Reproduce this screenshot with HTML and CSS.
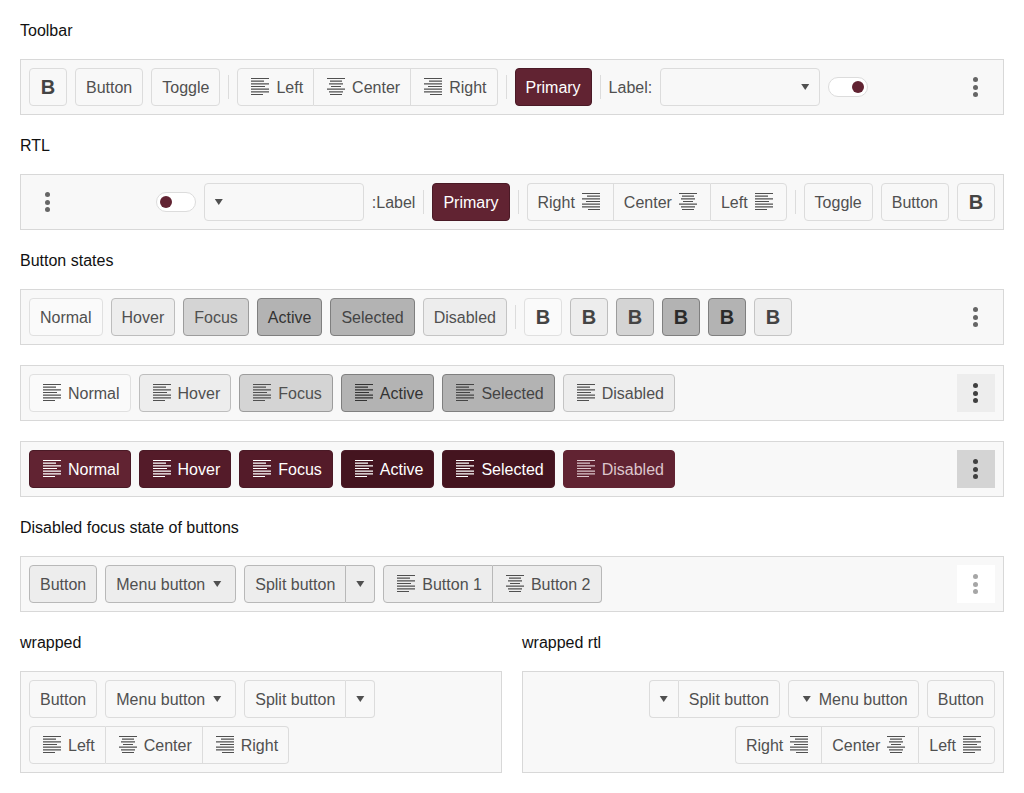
FILE: index.html
```html
<!DOCTYPE html>
<html lang="en">
<head>
<meta charset="utf-8">
<title>Toolbar</title>
<link rel="stylesheet" href="styles.css">
</head>
<body>
<svg class="sprite" xmlns="http://www.w3.org/2000/svg">
  <symbol id="i-left" viewBox="0 0 24 24"><path d="M3 3.5h18M3 6.2h13M3 8.8h18M3 11.5h14M3 14.2h18M3 16.8h18M3 19.5h12"/></symbol>
  <symbol id="i-center" viewBox="0 0 24 24"><path d="M3 3.5h18M6 6.2h12M5 8.8h14M7 11.5h10M3 14.2h18M5 16.8h14M6 19.5h12"/></symbol>
  <symbol id="i-right" viewBox="0 0 24 24"><path d="M3 3.5h18M8 6.2h13M3 8.8h18M7 11.5h14M3 14.2h18M3 16.8h18M9 19.5h12"/></symbol>
</svg>

<p class="label">Toolbar</p>
<div class="toolbar">
  <button class="btn sq"><span class="bold">B</span></button>
  <button class="btn">Button</button>
  <button class="btn">Toggle</button>
  <span class="sep"></span>
  <div class="group">
    <button class="btn"><svg class="ico"><use href="#i-left"/></svg>Left</button>
    <button class="btn"><svg class="ico"><use href="#i-center"/></svg>Center</button>
    <button class="btn"><svg class="ico"><use href="#i-right"/></svg>Right</button>
  </div>
  <span class="sep"></span>
  <button class="btn primary">Primary</button>
  <span class="sep"></span>
  <span class="txt">Label:</span>
  <div class="select"><span class="caret"></span></div>
  <span class="switch"><span class="knob"></span></span>
  <button class="kebab"><i></i><i></i><i></i></button>
</div>

<p class="label">RTL</p>
<div class="toolbar" dir="rtl">
  <button class="btn sq"><span class="bold">B</span></button>
  <button class="btn">Button</button>
  <button class="btn">Toggle</button>
  <span class="sep"></span>
  <div class="group">
    <button class="btn"><svg class="ico"><use href="#i-left"/></svg>Left</button>
    <button class="btn"><svg class="ico"><use href="#i-center"/></svg>Center</button>
    <button class="btn"><svg class="ico"><use href="#i-right"/></svg>Right</button>
  </div>
  <span class="sep"></span>
  <button class="btn primary">Primary</button>
  <span class="sep"></span>
  <span class="txt">Label:</span>
  <div class="select"><span class="caret"></span></div>
  <span class="switch"><span class="knob"></span></span>
  <button class="kebab"><i></i><i></i><i></i></button>
</div>

<p class="label">Button states</p>
<div class="stack">
  <div class="toolbar">
    <button class="btn normal">Normal</button>
    <button class="btn hover">Hover</button>
    <button class="btn focus">Focus</button>
    <button class="btn active">Active</button>
    <button class="btn selected">Selected</button>
    <button class="btn disabled">Disabled</button>
    <span class="sep"></span>
    <button class="btn sq normal"><span class="bold">B</span></button>
    <button class="btn sq hover"><span class="bold">B</span></button>
    <button class="btn sq focus"><span class="bold">B</span></button>
    <button class="btn sq active dark"><span class="bold">B</span></button>
    <button class="btn sq selected dark"><span class="bold">B</span></button>
    <button class="btn sq disabled"><span class="bold">B</span></button>
    <button class="kebab"><i></i><i></i><i></i></button>
  </div>
  <div class="toolbar">
    <button class="btn normal"><svg class="ico"><use href="#i-left"/></svg>Normal</button>
    <button class="btn hover"><svg class="ico"><use href="#i-left"/></svg>Hover</button>
    <button class="btn focus"><svg class="ico"><use href="#i-left"/></svg>Focus</button>
    <button class="btn active"><svg class="ico"><use href="#i-left"/></svg>Active</button>
    <button class="btn selected"><svg class="ico"><use href="#i-left"/></svg>Selected</button>
    <button class="btn disabled"><svg class="ico"><use href="#i-left"/></svg>Disabled</button>
    <button class="kebab kebab-hover"><i></i><i></i><i></i></button>
  </div>
  <div class="toolbar">
    <button class="btn primary"><svg class="ico"><use href="#i-left"/></svg>Normal</button>
    <button class="btn primary p-hover"><svg class="ico"><use href="#i-left"/></svg>Hover</button>
    <button class="btn primary p-hover"><svg class="ico"><use href="#i-left"/></svg>Focus</button>
    <button class="btn primary p-active"><svg class="ico"><use href="#i-left"/></svg>Active</button>
    <button class="btn primary p-active"><svg class="ico"><use href="#i-left"/></svg>Selected</button>
    <button class="btn primary p-disabled"><svg class="ico"><use href="#i-left"/></svg>Disabled</button>
    <button class="kebab kebab-focus"><i></i><i></i><i></i></button>
  </div>
</div>

<p class="label">Disabled focus state of buttons</p>
<div class="toolbar">
  <button class="btn hover-off">Button</button>
  <button class="btn hover-off">Menu button<span class="caret after"></span></button>
  <div class="group">
    <button class="btn hover-off">Split button</button>
    <button class="btn hover-off drop"><span class="caret"></span></button>
  </div>
  <div class="group">
    <button class="btn hover-off"><svg class="ico"><use href="#i-left"/></svg>Button 1</button>
    <button class="btn hover-off"><svg class="ico"><use href="#i-center"/></svg>Button 2</button>
  </div>
  <button class="kebab kebab-off"><i></i><i></i><i></i></button>
</div>

<div class="columns">
  <div>
    <p class="label">wrapped</p>
    <div class="toolbar wrap">
      <button class="btn">Button</button>
      <button class="btn">Menu button<span class="caret after"></span></button>
      <div class="group">
        <button class="btn">Split button</button>
        <button class="btn drop"><span class="caret"></span></button>
      </div>
      <div class="group">
        <button class="btn"><svg class="ico"><use href="#i-left"/></svg>Left</button>
        <button class="btn"><svg class="ico"><use href="#i-center"/></svg>Center</button>
        <button class="btn"><svg class="ico"><use href="#i-right"/></svg>Right</button>
      </div>
    </div>
  </div>
  <div>
    <p class="label">wrapped rtl</p>
    <div class="toolbar wrap" dir="rtl">
      <button class="btn">Button</button>
      <button class="btn">Menu button<span class="caret after"></span></button>
      <div class="group">
        <button class="btn">Split button</button>
        <button class="btn drop"><span class="caret"></span></button>
      </div>
      <div class="group">
        <button class="btn"><svg class="ico"><use href="#i-left"/></svg>Left</button>
        <button class="btn"><svg class="ico"><use href="#i-center"/></svg>Center</button>
        <button class="btn"><svg class="ico"><use href="#i-right"/></svg>Right</button>
      </div>
    </div>
  </div>
</div>
</body>
</html>
```
FILE: styles.css
```css
* { box-sizing: border-box; }

html, body { margin: 0; background: #fff; }

body {
  padding: 20px;
  font: 16px/19px "Liberation Sans", Arial, sans-serif;
  color: #111;
}

.sprite { position: absolute; width: 0; height: 0; overflow: hidden; }

.sprite path { fill: none; stroke: currentColor; stroke-width: 1.2; }

.label { margin: 0 0 20px; height: 19px; line-height: 21px; }

.toolbar {
  display: flex;
  align-items: center;
  gap: 8px;
  height: 56px;
  padding: 8px;
  margin-bottom: 20px;
  background: #f8f8f8;
  border: 1px solid #d8d8d8;
}

.toolbar.wrap { flex-wrap: wrap; height: 102px; margin-bottom: 0; align-content: flex-start; }

.stack { display: flex; flex-direction: column; }

.columns { display: grid; grid-template-columns: 1fr 1fr; gap: 20px; }

.btn {
  display: inline-flex;
  align-items: center;
  flex: none;
  height: 38px;
  padding: 0 10px;
  margin: 0;
  font: inherit;
  color: #505050;
  white-space: nowrap;
  background: transparent;
  border: 1px solid #dcdcdc;
  border-radius: 4px;
}

.btn.sq { width: 38px; padding: 0; justify-content: center; }

.bold { font-size: 20px; font-weight: 700; color: #444; }

.ico {
  width: 24px;
  height: 24px;
  flex: none;
  margin-inline-end: 4px;
  fill: none;
  stroke: currentColor;
}

.group { display: flex; flex: none; }

.group .btn { border-radius: 0; }

.group .btn + .btn { border-inline-start: 0; }

.group .btn:first-child { border-start-start-radius: 4px; border-end-start-radius: 4px; }

.group .btn:last-child { border-start-end-radius: 4px; border-end-end-radius: 4px; }

.btn.drop { padding: 0 6px; }

.caret {
  display: block;
  flex: none;
  width: 16px;
  height: 6px;
  background: #505050;
  clip-path: polygon(4px 0, 12px 0, 8px 100%);
}

.caret.after { margin-inline-start: 4px; }

.sep { flex: none; width: 1px; height: 24px; background: #dcdcdc; }

.txt { flex: none; color: #505050; }

.select {
  display: flex;
  align-items: center;
  justify-content: flex-end;
  flex: none;
  width: 160px;
  height: 38px;
  padding: 0 6px;
  background: transparent;
  border: 1px solid #dcdcdc;
  border-radius: 4px;
}

.switch {
  display: flex;
  align-items: center;
  justify-content: flex-end;
  flex: none;
  width: 40px;
  height: 20px;
  padding: 0 3px;
  background: #fff;
  border: 1px solid #dcdcdc;
  border-radius: 10px;
}

.knob { width: 12px; height: 12px; border-radius: 50%; background: #612332; }

.kebab {
  display: flex;
  flex-direction: column;
  align-items: center;
  justify-content: center;
  gap: 2.5px;
  flex: none;
  width: 38px;
  height: 38px;
  padding: 0 1px 0 0;
  margin-inline-start: auto;
  color: #666;
  background: transparent;
  border: 0;
}

.kebab i { display: block; width: 5px; height: 5px; border-radius: 50%; background: currentColor; }

.normal { background: #fafafa; border-color: #e0e0e0; }

.hover { background: #ededed; border-color: #bdbdbd; }

.focus { background: #d4d4d4; border-color: #9c9c9c; }

.active, .selected { background: #b3b3b3; border-color: #7f7f7f; }

.active { color: #333; }

.selected { color: #444; }

.dark .bold { color: #2b2b2b; }

.disabled { background: #ededed; border-color: #c4c4c4; }

.hover-off { background: #ededed; border-color: #b8b8b8; }

.primary { color: #fff; background: #612332; border-color: #4a1a26; }

.p-hover { background: #541b29; }

.p-active { background: #44141f; }

.p-disabled { color: #dcc6cc; background: #612332; border-color: #612332; }

.kebab-hover { color: #404040; background: #ededed; }

.kebab-focus { color: #404040; background: #d4d4d4; }

.kebab-off { color: #a6a6a6; background: #fff; }
```
